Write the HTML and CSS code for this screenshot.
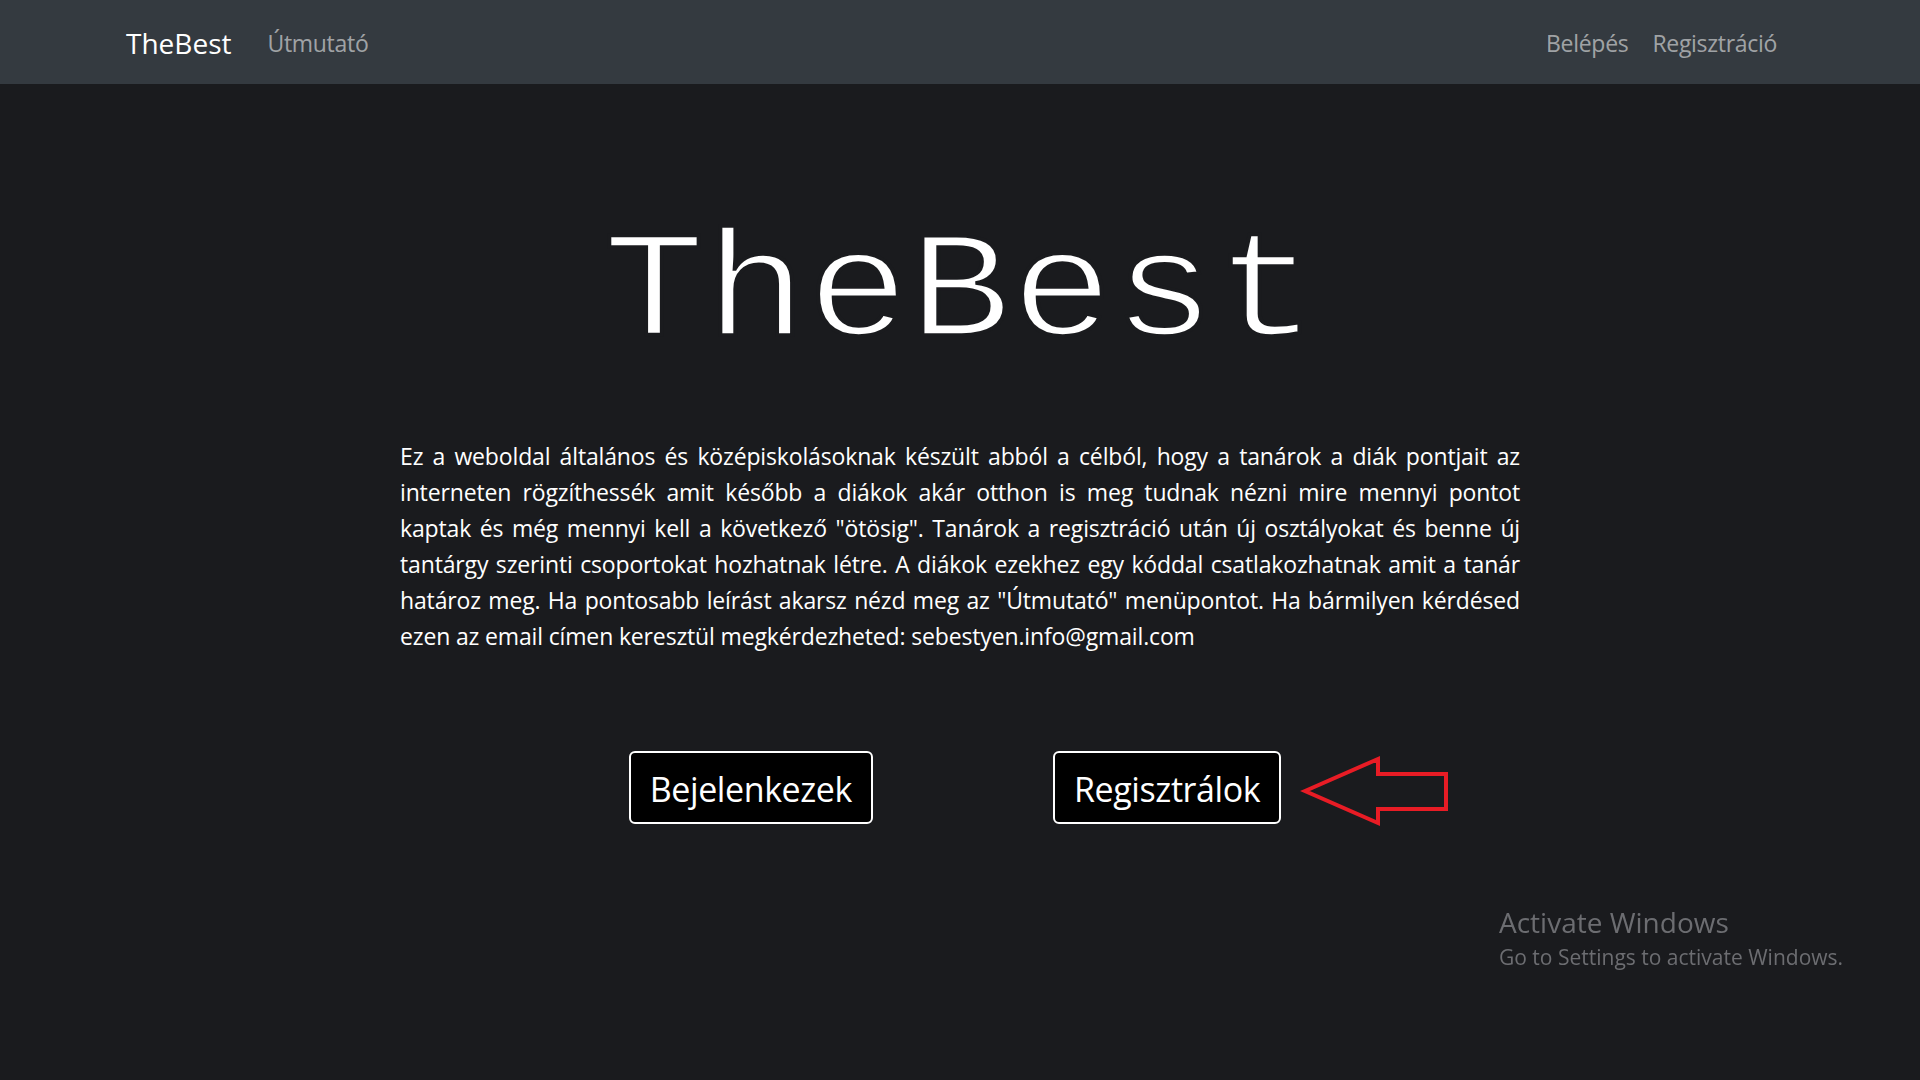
FILE: index.html
```html
<!DOCTYPE html>
<html lang="hu">
<head>
<meta charset="utf-8">
<title>TheBest</title>
<link rel="stylesheet" href="styles.css">
</head>
<body>
<nav class="navbar">
  <div class="nav-container">
    <a class="brand" href="#">TheBest</a>
    <a class="nav-link" href="#">Útmutató</a>
    <div class="nav-right">
      <a class="nav-link" href="#">Belépés</a>
      <a class="nav-link" href="#">Regisztráció</a>
    </div>
  </div>
</nav>
<main class="hero">
  <h1 class="title">TheBest</h1>
  <p class="intro">
    <span class="line">Ez a weboldal általános és középiskolásoknak készült abból a célból, hogy a tanárok a diák pontjait az</span>
    <span class="line">interneten rögzíthessék amit később a diákok akár otthon is meg tudnak nézni mire mennyi pontot</span>
    <span class="line">kaptak és még mennyi kell a következő "ötösig". Tanárok a regisztráció után új osztályokat és benne új</span>
    <span class="line">tantárgy szerinti csoportokat hozhatnak létre. A diákok ezekhez egy kóddal csatlakozhatnak amit a tanár</span>
    <span class="line">határoz meg. Ha pontosabb leírást akarsz nézd meg az "Útmutató" menüpontot. Ha bármilyen kérdésed</span>
    <span class="line last">ezen az email címen keresztül megkérdezheted: sebestyen.info@gmail.com</span>
  </p>
  <div class="actions">
    <a class="btn btn-login" href="#">Bejelenkezek</a>
    <span class="btn-wrap">
      <a class="btn btn-register" href="#">Regisztrálok</a>
      <svg class="arrow" width="156" height="80" viewBox="0 0 156 80" aria-hidden="true">
        <polygon points="6,38 79,6 79,21 147,21 147,56 79,56 79,70" fill="none" stroke="#e81c25" stroke-width="4" stroke-linejoin="miter"/>
      </svg>
    </span>
  </div>
</main>
<div class="activate">
  <div class="activate-title">Activate Windows</div>
  <div class="activate-sub">Go to Settings to activate Windows.</div>
</div>
</body>
</html>
```
FILE: styles.css
```css
* { box-sizing: border-box; }
html, body { height: 100%; }
body {
  margin: 0;
  background: #1a1b1e;
  color: #fff;
  font-family: "Open Sans", "Noto Sans", sans-serif;
  font-size: 23px;
  line-height: 36px;
}
a { text-decoration: none; }

.navbar {
  background: #343a40;
  padding: 12px 0;
}
.nav-container {
  max-width: 1710px;
  margin: 0 auto;
  padding: 0 18px;
  display: flex;
  align-items: center;
}
.brand {
  color: #fff;
  font-size: 28px;
  line-height: 45px;
  padding: 8.5px 0 6.5px 3px;
  margin-right: 24px;
}
.nav-link {
  color: rgba(255, 255, 255, 0.55);
  font-size: 23px;
  letter-spacing: -0.3px;
  line-height: 36px;
  padding: 13px 12px 11px;
}
.nav-right {
  margin-left: auto;
  display: flex;
  margin-right: 8px;
}

.hero {
  display: flex;
  flex-direction: column;
  align-items: center;
}
.title {
  margin: 104px 0 0;
  font-family: "Liberation Mono", monospace;
  font-weight: 400;
  font-size: 170px;
  line-height: 1.2;
  -webkit-text-stroke: 4px #1a1b1e;
  paint-order: fill stroke;
  transform: scaleY(0.88);
  transform-origin: 50% 147px;
}
.intro {
  width: 1120px;
  margin: 46px 0 0;
  letter-spacing: -0.15px;
}
.line {
  display: block;
  white-space: nowrap;
  text-align: justify;
  text-align-last: justify;
}
.line.last { text-align-last: left; }

.actions {
  margin-top: 97px;
  padding-right: 10px;
  display: flex;
  justify-content: center;
  gap: 180px;
}
.btn {
  display: inline-flex;
  align-items: center;
  justify-content: center;
  height: 73px;
  padding: 2px 19px 0;
  background: #000;
  color: #fff;
  border: 2px solid #fff;
  border-radius: 6px;
  font-size: 34px;
  letter-spacing: -0.4px;
}
.btn-wrap {
  position: relative;
  display: inline-flex;
}
.arrow {
  position: absolute;
  left: calc(100% + 18px);
  top: 2px;
}

.activate {
  position: fixed;
  left: 1499px;
  top: 903px;
  color: #6c6d71;
}
.activate-title {
  font-size: 28px;
  line-height: 38px;
}
.activate-sub {
  font-size: 21px;
  line-height: 28px;
  margin-top: 2px;
}
```
